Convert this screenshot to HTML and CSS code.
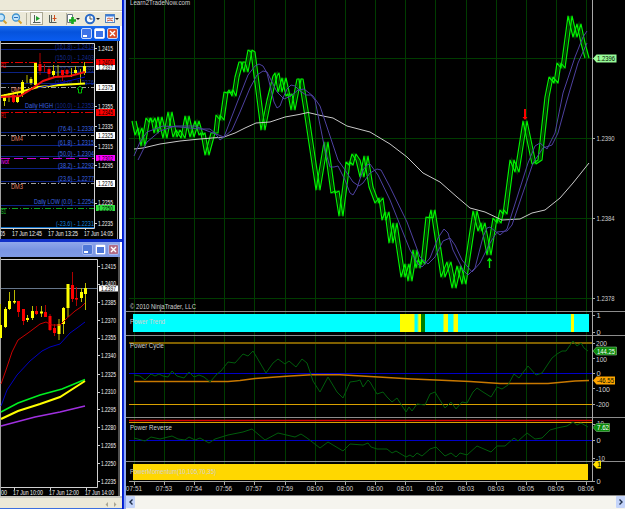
FILE: index.html
```html
<!DOCTYPE html>
<html lang="en">
<head>
<meta charset="utf-8">
<title>Trading workspace</title>
<link rel="stylesheet" href="styles.css">
</head>
<body>
<div class="workspace">
  <section class="terminal">
    <header class="toolbar">
      <svg width="122" height="26" viewBox="0 0 122 26">
        <path class="tool-edge" d="M0 10.5H122"/>
        <path class="tool-light" d="M0 11.5H122"/>
        <g class="lens"><circle cx="1" cy="17.5" r="3.5"/><path class="handle" d="M3.500 20.500l3 3"/></g>
        <g class="lens"><circle cx="16" cy="17.5" r="3.5"/><path class="minus" d="M14 17.500h4"/><path class="handle" d="M18.500 20.500l3 3"/></g>
        <path class="tool-sep" d="M26.500 13v12M66.500 13v12"/>
        <rect class="pressed" x="30.5" y="12.5" width="12" height="12"/>
        <path class="axes" d="M34.500 15v7.500h6M33 22.500h2M49.500 15v7.500h7M51.500 15v7"/>
        <path class="play" d="M36 16l4 2.500-4 2.500z"/>
        <path class="marker" d="M54.500 15v6M52.500 18.500h4"/>
        <path class="page" d="M67.500 14.500h5v8h-5z"/>
        <path class="plus" d="M72.500 17v7M69 20.500h7"/>
        <path class="caret" d="M76 18h4l-2 2zM96 18h4l-2 2zM115 18h4l-2 2z"/>
        <circle class="clock" cx="90" cy="19" r="4.2"/>
        <path class="hands" d="M90 16v3h2.500"/>
        <rect class="mini" x="105.5" y="14.5" width="9" height="8"/>
        <path class="mini-head" d="M106 15.500h8"/>
        <path class="mini-line" d="M107 19l2-1 2 1 2-1M107 21l3-1 3 1"/>
      </svg>
    </header>

    <div class="titlebar active">
      <span class="winbtn min"></span><span class="winbtn max"></span><span class="winbtn close"><svg width="7" height="7" viewBox="0 0 7 7"><path d="M1 1l5 5M6 1l-5 5"/></svg></span>
    </div>
    <svg class="chart" width="119" height="198" viewBox="0 41 119 198">
      <rect class="black" x="0" y="41" width="119" height="198"/>
      <path class="frame" d="M0 43.500H94.500V228.500H0"/>
      <path class="edge" d="M.5 41V239M117.500 41V239"/>
      <path class="fib" d="M1 49.500H94M1 72.500H94M1 83.500H94M1 109.500H94M1 132.500H94M1 145.500H94M1 156.500H94M1 168.500H94M1 181.500H94M1 205.500H94"/>
      <path class="fib-low" d="M1 227.500H94"/>
      <path class="slate" d="M1 66.500H94"/>
      <path class="pivot-red" d="M1 62.500H94M1 112.500H94"/>
      <path class="pivot-gray" d="M1 87.500H94M1 135.500H94M1 183.500H94"/>
      <path class="pivot-magenta" d="M1 158.500H94"/>
      <path class="pivot-green" d="M1 208.500H94"/>
      <g class="tiny dim">
        <text x="55" y="49" textLength="39">(161.8) - 1.2414</text><text x="55" y="60" textLength="39">(150.0) - 1.2403</text>
        <text x="55" y="72" textLength="39">(127.2) - 1.2391</text><text x="55" y="85" textLength="39">(114.0) - 1.2376</text>
        <text x="55" y="108" textLength="39">(100.0) - 1.2353</text>
      </g>
      <g class="tiny blue">
        <text x="25" y="108" textLength="28">Daily HIGH</text>
        <text x="58" y="131" textLength="36">(76.4) -  1.2330</text><text x="58" y="145" textLength="36">(61.8) -  1.2315</text>
        <text x="58" y="156" textLength="36">(50.0) -  1.2304</text><text x="58" y="167.500" textLength="36">(38.2) -  1.2292</text>
        <text x="58" y="181" textLength="36">(23.6) -  1.2277</text><text x="34" y="204" textLength="60">Daily LOW (0.0) -  1.2254</text>
        <text class="sky" x="56" y="226" textLength="38">(-23.6) -  1.2231</text>
      </g>
      <g class="tiny salmon"><text x="11" y="92" textLength="11">DM5</text><text x="11" y="141" textLength="12">DM4</text><text x="11" y="189" textLength="12">DM3</text></g>
      <text class="tiny mag" x="1" y="164" textLength="8">ivot</text>
      <text class="tiny red" x="1" y="68" textLength="5">R2</text><text class="tiny red" x="1" y="118" textLength="5">R1</text><text class="tiny lime" x="1" y="214" textLength="5">S1</text>
      <path class="wick-y" d="M4.500 94v12M9 93v9M17.500 93v10M22.500 80v17M27 75v8M31 77v8M53.500 65v12M58 65v11M71.500 68v9M75.500 66v8M80.500 69v14M84.500 62v13"/>
      <path class="body-y" d="M4.500 96v5M17.500 96v6M22.500 82v13M31 79v4M35.500 63v22M53.500 71v4M75.500 70v3M84.500 66v7"/>
      <path class="wick-r" d="M13.500 92v11M40 53v22M44.500 64v8M49 67v11M62.500 70v11M67 69v8"/>
      <path class="body-r" d="M13.500 95v7M40 64v7M49 69v5M62.500 70v5M67 70v4"/>
      <path class="ma-yellow" d="M1 96L20 92L38 87L60 85L85 83.500"/>
      <path class="ma-blue" d="M38 88L60 83L85 77"/>
      <path class="ma-red thick" d="M1 97L20 96L30 90L43 81L55 77L70 76L85 72"/>
      <path class="up-outline" d="M80 86l3 3h-1.500v4h-3v-4H77z"/>
      <path class="tick" d="M94 48.500h3M94 106.500h3M94 126.500h3M94 146.500h3M94 165.500h3M94 203.500h3M94 223.500h3M13.500 228v2M49.500 228v2M85.500 228v2"/>
      <g class="tiny pale">
        <text x="98" y="50.500" textLength="15">1.2415</text><text x="98" y="108.500" textLength="15">1.2355</text><text x="98" y="128.500" textLength="15">1.2335</text><text x="98" y="148.500" textLength="15">1.2315</text><text x="98" y="167.500" textLength="15">1.2295</text><text x="98" y="204.500" textLength="15">1.2255</text><text x="98" y="225.500" textLength="15">1.2235</text>
        <text x="0" y="236" textLength="5">05</text><text x="12" y="236" textLength="30">17 Jun 12:45</text><text x="48" y="236" textLength="30">17 Jun 13:25</text><text x="84" y="236" textLength="29">17 Jun 14:05</text>
      </g>
      <path class="t-w" d="M96 64h19v6h-19zM96 84h19v7h-19zM96 132h19v7h-19zM96 180h19v7h-19z"/>
      <path class="t-r" d="M96 59h19v6h-19zM96 109h19v7h-19z"/>
      <path class="t-m" d="M96 155h19v6h-19z"/>
      <path class="t-g" d="M96 205h19v6h-19z"/>
      <g class="tiny ink">
        <text x="98" y="70" textLength="15">1.2397</text><text x="98" y="64.500" textLength="15">1.2401</text><text x="98" y="90" textLength="15">1.2375</text><text x="98" y="115" textLength="15">1.2345</text><text x="98" y="138" textLength="15">1.2325</text><text x="98" y="160.500" textLength="15">1.2302</text><text x="98" y="186" textLength="15">1.2276</text><text x="98" y="210.500" textLength="15">1.2250</text>
      </g>
    </svg>
    <div class="gap"></div>
    <div class="titlebar inactive">
      <span class="winbtn min"></span><span class="winbtn max"></span><span class="winbtn close"><svg width="7" height="7" viewBox="0 0 7 7"><path d="M1 1l5 5M6 1l-5 5"/></svg></span>
    </div>
    <svg class="chart" width="120" height="239" viewBox="0 257 120 239">
      <rect class="black" x="0" y="257" width="120" height="239"/>
      <path class="frame" d="M0 259.500H97.500V487.500H0"/>
      <path class="edge" d="M.5 257V496M119 257V496"/>
      <path class="slate" d="M1 288.500H97"/>
      <path class="wick-y" d="M.5 304v34M5.500 307v21M9.500 292v18M14.500 290v14M27.500 315v7M32.500 306v14M41.500 306v11M59 319v21M63.500 307v27M68 284v33M81.500 288v14M85.500 283v27"/>
      <path class="body-y" d="M.5 325v13M5.500 309v18M9.500 301v8M14.500 301v1.500M27.500 318v2M32.500 311v7M41.500 311.500v2M59 324v10M63.500 308v16M68 284v24M81.500 292v6M85.500 288v6"/>
      <path class="wick-r" d="M18.500 301v16M23.500 309v16M36.500 306v9M45.500 305v12M50 314v17M54.500 324v12M72.500 272v30M76.500 287v19"/>
      <path class="body-r" d="M18.500 301v11M23.500 309v12M36.500 311v3M45.500 312v5M50 316v14M54.500 328v5M72.500 285v14M76.500 298v1.500"/>
      <path class="ma-red" d="M1 384L6 370L12 352L18 340L28 333L40 324L46 322L52 325L60 325L66 319L75 311L81 307L85 303"/>
      <path class="ma-blue" d="M1 406L7 390L17 375L30 361L42 351L50 347L60 344L70 333L77 328L85 322"/>
      <path class="ma-green" d="M1 412L18 403L40 395L62 389L85 379.500"/>
      <path class="ma-yellow" d="M1 419L18 411L40 404L60 397L85 381"/>
      <path class="ma-purple" d="M1 426L35 417L60 412L85 406"/>
      <path class="tick" d="M97 266.500h3M97 284.500h3M97 302.500h3M97 320.500h3M97 338.500h3M97 355.500h3M97 374.500h3M97 392.500h3M97 409.500h3M97 427.500h3M97 445.500h3M97 463.500h3M97 481.500h3M14.500 487v3M50.500 487v3M86.500 487v3"/>
      <g class="tiny pale">
        <text x="101" y="268.500" textLength="15">1.2415</text><text x="101" y="286" textLength="15">1.2400</text><text x="101" y="304.500" textLength="15">1.2385</text><text x="101" y="322.500" textLength="15">1.2370</text><text x="101" y="340" textLength="15">1.2355</text><text x="101" y="358" textLength="15">1.2340</text><text x="101" y="376.500" textLength="15">1.2325</text><text x="101" y="394" textLength="15">1.2310</text><text x="101" y="412" textLength="15">1.2295</text><text x="101" y="429.500" textLength="15">1.2280</text><text x="101" y="447.500" textLength="15">1.2265</text><text x="101" y="465.500" textLength="15">1.2250</text><text x="101" y="483.500" textLength="15">1.2235</text>
        <text x="1" y="495" textLength="6">00</text><text x="13" y="495" textLength="30">17 Jun 10:00</text><text x="49" y="495" textLength="30">17 Jun 12:00</text><text x="85" y="495" textLength="29">17 Jun 14:00</text>
      </g>
      <rect class="t-w" x="99" y="285.5" width="19" height="6"/>
      <text class="tiny ink" x="101" y="291" textLength="15">1.2397</text>
    </svg>
    <footer class="hscroll"><svg width="20" height="6" viewBox="0 0 20 6"><path d="M8 0v5l-2.500-2.500zM14 0v5l2.500-2.500z"/></svg></footer>
  </section>

  <div class="splitter"></div>

  <main class="ninja">
    <svg class="panel" width="499" height="311" viewBox="126 0 499 311">
      <defs>
        <path id="vgrid" d="M134.500 0V500M164.500 0V500M194.500 0V500M224.500 0V500M254.500 0V500M285.500 0V500M315.500 0V500M345.500 0V500M375.500 0V500M405.500 0V500M435.500 0V500M466.500 0V500M496.500 0V500M526.500 0V500M556.500 0V500M586.500 0V500"/>
        <polyline id="price" points="134,121 137,135 140,128 143,146 148,118 151,122 153,118 156,133 160,117 165,138 170,112 175,137 178,130 183,138 187,116 192,137 197,121 201,135 203,133 207,155 213,133 216,133 218,115 222,120 226,92 229,93 231,90 234,96 237,77 241,62 243,62 246,72 250,50 253,52 263,130 269,100 275,76 277,73 280,92 284,78 288,96 290,94 293,110 299,79 301,79 306,110 318,190 326,142 333,193 337,191 341,216 348,162 351,165 354,154 358,160 362,177 366,156 371,187 377,203 381,198 384,220 387,212 391,243 395,223 403,277 407,264 410,281 415,250 418,268 420,260 423,264 428,217 431,218 433,210 443,277 449,262 454,288 459,266 464,284 475,211 480,231 483,223 489,255 495,218 499,223 502,210 505,214 512,160 517,172 525,121 534,164 540,160 547,97 551,77 556,83 559,63 563,68 570,16 575,37 579,24 583,43 587,58"/>
      </defs>
      <use class="vgrid" href="#vgrid"/>
      <path class="hgrid" d="M129 58.500H592M129 138.500H592M129 218.500H592M129 298.500H592"/>
      <use class="price-core" href="#price"/>
      <use class="price" href="#price" x="-2"/>
      <use class="price" href="#price" x="2"/>
      <polyline class="sma" points="134,149 143,148 160,144 180,141 200,139 224,137 235,133 245,128 256,123 270,122 285,117 299,114.500 308,112.500 323,116 333,118 347,126 370,132 390,144 407,157 423,173 440,182 457,197 470,208 485,212 502,220 520,219 532,213 545,210 560,198 573,183 589,163"/>
      <polyline class="avg" points="134,156 140,142 147,132 163,126 180,127 200,129 210,129 215,133 220,140 224,137 237,103 248,75 255,66 259,64 263,66 267,73 274,102 277,108 280,106 283,98 287,89 291,85 295,86 300,91 306,95 311,95 315,100 320,125 325,150 330,167 334,167 338,166 345,180 350,193 353,195 357,188 363,170 367,165 370,164 378,175 390,200 410,250 418,264 422,267 430,258 438,238 444,229 448,233 453,250 463,270 468,275 475,268 483,237 487,228 490,227 500,235 507,229 528,163 535,146 540,143 547,149 555,133 563,93 575,57 583,37 587,31"/>
      <polyline class="avg" points="138,160 147,142 160,131 175,126 195,126 205,130 224,137 232,130 240,112 250,88 257,75 263,71 267,72 271,80 277,92 284,99 291,96 298,90 304,89 313,96 320,106 328,130 338,160 345,170 353,182 359,186 363,183 370,173 377,169 381,170 390,187 407,222 420,257 428,264 435,257 443,241 450,238 455,245 462,260 472,272 480,263 490,243 497,232 507,231 512,225 533,163 543,148 552,145 558,133 567,100 578,63 587,43"/>
      <path class="down-arrow" d="M524 109h2v8h1.500l-2.500 3-2.500-3h1.500z"/>
      <path class="up-arrow" d="M489.500 268V259M487.500 261l2-2.500 2 2.500"/>
      <path class="axis" d="M592.500 0V311M592 58.500h3M592 138.500h3M592 218.500h3M592 298.500h3"/>
      <g class="label"><text x="130" y="5" textLength="60">Learn2TradeNow.com</text><text x="130" y="308.500" textLength="66">© 2010 NinjaTrader, LLC</text>
      <text x="596.500" y="141" textLength="18">1.2390</text><text x="596.500" y="221" textLength="18">1.2384</text><text x="596.500" y="301" textLength="18">1.2378</text></g>
      <path class="tag-price" d="M593 58.500l3.500-4h20v8h-20z"/>
      <text class="label dark" x="597" y="61" textLength="18">1.2396</text>
    </svg>

    <svg class="panel" width="499" height="24" viewBox="126 311 499 24">
      <use class="vgrid" href="#vgrid"/>
      <path class="rule" d="M126 311.500H625"/>
      <rect class="cyan" x="133" y="314" width="456" height="18"/>
      <path class="yellow" d="M400 314h14v18h-14zM418 314h3v18h-3zM443.500 314h4.500v18h-4.500zM453.500 314h4.500v18h-4.500zM571 314h3v18h-3z"/>
      <path class="mint" d="M414 314h1v18h-1zM417.500 314h1v18h-1zM443 314h1v18h-1zM453 314h1v18h-1z"/>
      <rect class="forest" x="421" y="314" width="4" height="18"/>
      <path class="axis" d="M592.500 311V335M592 315.500h3M592 332.500h3"/>
      <g class="label"><text x="130" y="323.500" textLength="35">Power Trend</text><text x="596.500" y="318">1</text><text x="596.500" y="335">0</text></g>
    </svg>

    <svg class="panel" width="499" height="82" viewBox="126 335 499 82">
      <use class="vgrid" href="#vgrid"/>
      <path class="rule" d="M126 335.500H625"/>
      <path class="olive" d="M129 343H592"/>
      <path class="zero" d="M129 373.500H592"/>
      <path class="amber" d="M129 404.500H592"/>
      <polyline class="orange" points="134,381.500 228,381.500 240,380.500 255,378.500 290,376 312,374.800 340,374.800 370,376.500 412,379 436,380 470,381.500 500,383.500 548,383.500 575,381 589,380.500"/>
      <polyline class="osc" points="134,375 140,376 145,380 151,374 155,376 159,374 163,376 168,377 172,371 177,376 184,378 189,372 194,377 199,375 204,377 210,382 217,374 221,371 228,362 235,363 243,354 248,356 253,351 266,373 273,363 278,359 285,364 289,361 296,367 302,359 307,363 313,381 320,392 328,377 337,392 343,398 350,382 357,381 360,380 363,387 368,380 370,382 377,394 383,392 387,397 392,402 397,398 406,412 409,407 412,411 417,404 425,405 430,394 435,392 438,397 445,408 451,402 456,409 462,402 467,403 473,392 477,388 483,392 491,397 497,387 502,389 508,385 514,374 519,378 528,366 536,375 542,373 552,358 557,354 562,351 566,351 573,341 577,346 581,343 584,348 588,351"/>
      <path class="axis" d="M592.500 335V417M592 343.500h3M592 358.500h3M592 373.500h3M592 388.500h3M592 404.500h3"/>
      <g class="label"><text x="130" y="347.500" textLength="34">Power Cycle</text><text x="596" y="346" textLength="11">200</text><text x="596" y="361.500" textLength="11">100</text><text x="596.500" y="376">0</text><text x="596" y="392" textLength="14">-100</text><text x="596" y="407" textLength="13">-200</text></g>
      <path class="tag-green" d="M593 351l3.500-4h20v8h-20z"/><text class="label white" x="597" y="353.500" textLength="18">144.25</text>
      <path class="tag-orange" d="M593 380.500l3.500-4h18.500v8h-18.500z"/><text class="label dark" x="597" y="383" textLength="17">-46.55</text>
    </svg>

    <svg class="panel" width="499" height="44" viewBox="126 417 499 44">
      <use class="vgrid" href="#vgrid"/>
      <path class="rule" d="M126 417.500H625"/>
      <path class="redline" d="M129 420.500H592"/>
      <path class="amber" d="M129 422.500H592"/>
      <path class="zero" d="M129 440.500H592"/>
      <polyline class="osc" points="134,438 145,441 151,437 160,439 172,436 178,439 185,440 189,437 195,440 200,438 209,443 215,439 228,435 243,432 252,429 265,440 278,433 295,437 301,434 307,438 320,448 328,442 343,451 350,444 363,445 368,443 371,447 377,449 387,449 392,453 396,451 406,457 410,455 413,457 417,453 422,456 430,449 436,447 445,456 451,453 456,457 460,453 467,455 477,446 491,452 497,446 505,446 514,438 518,441 527,433 535,439 542,438 550,430 557,428 567,426 573,422 577,425 581,423 588,427"/>
      <path class="axis" d="M592.500 417V461M592 424.500h3M592 440.500h3M592 458.500h3"/>
      <g class="label"><text x="130" y="429.500" textLength="42">Power Reverse</text><text x="597" y="426" textLength="7">10</text><text x="596.500" y="443">0</text><text x="596" y="460.500" textLength="9">-10</text></g>
      <path class="tag-green" d="M593 427.500l3.500-4h13v8h-13z"/><text class="label white" x="597" y="430" textLength="12">7.62</text>
    </svg>

    <svg class="panel" width="499" height="35" viewBox="126 461 499 35">
      <svg x="126" y="461" width="499" height="20" viewBox="126 461 499 20"><use class="vgrid" href="#vgrid"/></svg>
      <path class="rule" d="M126 461.500H625M126 495.500H625"/>
      <rect class="gold" x="133" y="464" width="455" height="16"/>
      <path class="axis" d="M592.500 461V481.500M129 481.500H595M134.500 481v4M164.500 481v4M194.500 481v4M224.500 481v4M254.500 481v4M285.500 481v4M315.500 481v4M345.500 481v4M375.500 481v4M405.500 481v4M435.500 481v4M466.500 481v4M496.500 481v4M526.500 481v4M556.500 481v4M586.500 481v4"/>
      <path class="tag-yellow" d="M593 464.500l3.500-4h4.500v8h-4.500z"/><text class="label dark" x="597" y="467">1</text>
      <g class="label"><text x="130" y="474" textLength="86">PowerMomentum(10,105,70,35)</text><text x="596.500" y="483.500">0</text></g>
      <g class="label times"><text x="134" y="491">07:51</text><text x="164" y="491">07:53</text><text x="194" y="491">07:54</text><text x="224" y="491">07:56</text><text x="254" y="491">07:57</text><text x="285" y="491">07:59</text><text x="315" y="491">08:00</text><text x="345" y="491">08:00</text><text x="375" y="491">08:00</text><text x="405" y="491">08:01</text><text x="435" y="491">08:02</text><text x="466" y="491">08:03</text><text x="496" y="491">08:03</text><text x="526" y="491">08:05</text><text x="556" y="491">08:05</text><text x="586" y="491">08:06</text></g>
    </svg>
    <footer class="scrollbar">
      <span class="sbtn"><svg width="4" height="6" viewBox="0 0 4 6"><path d="M3.500 .5L1 3l2.500 2.500"/></svg></span>
      <span class="sbtn"><svg width="4" height="6" viewBox="0 0 4 6"><path d="M.5 .5L3 3 .5 5.500"/></svg></span>
    </footer>
  </main>
</div>
<script src="labels.js"></script>
</body>
</html>
```
FILE: labels.js
```js
// Condense the glyphs themselves, not only the spaces between them.
for (const label of document.querySelectorAll("text[textLength]")) {
  label.setAttribute("lengthAdjust", "spacingAndGlyphs");
}
```
FILE: styles.css
```css
* { box-sizing: border-box; }
body { margin: 0; background: #000; overflow: hidden; font-family: "Liberation Sans", Arial, sans-serif; }
svg { display: block; fill: none; flex: none; }
.workspace { display: flex; width: 625px; height: 509px; }
.terminal { width: 122px; display: flex; flex-direction: column; background: linear-gradient(90deg, #dfe8fb 120px, #fff 120px); overflow: hidden; }
.splitter { width: 4px; background: linear-gradient(90deg, #0018c8 0 1px, #0a2be0 1px 2px, #8ea6f0 2px 4px); }
.ninja { width: 499px; display: flex; flex-direction: column; background: #000; }

.toolbar { height: 26px; background: #ece9d8; }
.tool-edge { stroke: #c9c5b2; }
.tool-light { stroke: #fff; }
.tool-sep { stroke: #b5b29f; }
.lens circle { fill: #c4e6fb; stroke: #3f92cf; stroke-width: 1.3; }
.minus { stroke: #2a6fc0; }
.handle { stroke: #d5a132; stroke-width: 2; }
.pressed { fill: #f7f6f0; stroke: #aaa793; }
.axes { stroke: #55605c; }
.play { fill: #20a030; }
.marker { stroke: #d05020; }
.page { fill: #fff; stroke: #6b7686; }
.plus { stroke: #18a820; stroke-width: 2.6; }
.caret { fill: #222; }
.clock { fill: #f4faff; stroke: #2869c8; stroke-width: 2; }
.hands { stroke: #555; }
.mini { fill: #eef6ff; stroke: #5585bf; }
.mini-head { stroke: #3a7ad8; stroke-width: 2; }
.mini-line { stroke: #d06040; }

.titlebar { display: flex; justify-content: flex-end; align-items: center; gap: 2px; width: 120px; height: 15px; padding-right: 2px; }
.titlebar.active { background: linear-gradient(#1c6cf0, #0553dc 40%, #0a5cf0); }
.titlebar.inactive { background: linear-gradient(#90a8ec, #7a95e2 50%, #7f9ae4); padding-right: 1px; }
.winbtn { width: 11px; height: 11px; flex: none; border: 1px solid #c8d8fa; border-radius: 2px; background: #3d72e8; display: flex; align-items: flex-end; padding: 1px; }
.winbtn.min::before { content: ""; width: 4px; height: 2px; background: #fff; }
.winbtn.max { align-items: center; justify-content: center; }
.winbtn.max::before { content: ""; width: 7px; height: 6px; flex: none; border: 1px solid #fff; border-top-width: 2px; }
.winbtn.close { background: #dc4f2c; }
.winbtn.close path { stroke: #fff; stroke-width: 1.4; }
.inactive .winbtn { background: #4f78d8; border-color: #a6b8ee; }
.inactive .winbtn.close { background: #b26c86; }
.gap { height: 3px; background: #1030c8; }
.hscroll { height: 13px; padding: 4px 2px 0 0; display: flex; justify-content: flex-end; border-top: 2px solid #c9c8c0; border-bottom: 1px solid #3b6fe0; background: #ece9d8; }
.hscroll path { fill: #a8a594; }

.black { fill: #000; }
.frame, .tick { stroke: #d0d0d0; }
.edge { stroke: #a0a0a0; }
.fib { stroke: #0c2284; }
.fib-low { stroke: #0868c0; }
.slate { stroke: #65758a; }
.pivot-red { stroke: #e00000; stroke-dasharray: 8 2 2 2; }
.pivot-gray { stroke: #a0a0a0; stroke-dasharray: 5 2 1 2; }
.pivot-magenta { stroke: #d000d0; stroke-dasharray: 9 4; }
.pivot-green { stroke: #10a020; stroke-dasharray: 6 2 1 2; }
.tiny { font-size: 6.5px; }
.dim { fill: #142a92; }
.blue { fill: #3c66e0; }
.sky { fill: #1580d8; }
.salmon { fill: #e08060; }
.mag { fill: #f0f; }
.red { fill: #f00; }
.lime { fill: #20d030; }
.pale { fill: #f4f4f4; }
.ink { fill: #000; }
.wick-y { stroke: #b8b800; }
.body-y { stroke: #ff0; stroke-width: 3; }
.wick-r { stroke: #b00000; }
.body-r { stroke: #f00; stroke-width: 3; }
.ma-yellow { stroke: #ff0; stroke-width: 2; }
.ma-green { stroke: #00f020; stroke-width: 1.5; }
.ma-purple { stroke: #a030e0; stroke-width: 1.5; }
.ma-blue { stroke: #0000c0; }
.ma-red { stroke: #c80000; }
.ma-red.thick { stroke: #f01010; stroke-width: 2; }
.up-outline { stroke: #00c000; }
.t-w { fill: #fff; }
.t-r { fill: #f00; }
.t-m { fill: #f0f; }
.t-g { fill: #30e040; }

.vgrid { stroke: #003c00; }
.hgrid { stroke: #003c00; }
.price { stroke: #00f400; stroke-width: 1.2; stroke-linejoin: round; }
.price-core { stroke: #004800; stroke-width: 1.6; }
.sma { stroke: #c8c8c8; }
.avg { stroke: #4e41a0; stroke-linejoin: round; }
.down-arrow { fill: #f00; }
.up-arrow { stroke: #00f000; stroke-width: 1.3; }
.axis { stroke: #a8a8a8; }
.rule { stroke: #8c8c8c; }
.label { font-size: 7.5px; fill: #d0d0d0; }
.label.dark { fill: #001000; }
.label.white { fill: #fff; }
.label.times { text-anchor: middle; font-size: 6.5px; }
.tag-price { fill: #98fb98; }
.tag-green { fill: #0a8a0a; stroke: #7fc07f; stroke-width: .6; }
.tag-orange { fill: #ffa500; }
.tag-yellow { fill: #ffe000; }
.cyan { fill: #0ff; }
.yellow { fill: #ff0; }
.mint { fill: #80ff80; }
.forest { fill: #008000; }
.olive { stroke: #806000; stroke-width: 2; }
.zero { stroke: #0000c8; }
.amber { stroke: #d8a000; }
.redline { stroke: #d80000; stroke-width: 1.6; }
.orange { stroke: #c87800; stroke-width: 1.4; }
.osc { stroke: #005c0c; }
.gold { fill: #ffd700; }
.scrollbar { height: 13px; background: #f5f4ee; display: flex; justify-content: space-between; }
.sbtn { width: 9px; height: 12px; background: #c4d4fa; display: flex; align-items: center; justify-content: center; border-radius: 1px; }
.sbtn path { stroke: #20304c; stroke-width: 1.4; }
```
